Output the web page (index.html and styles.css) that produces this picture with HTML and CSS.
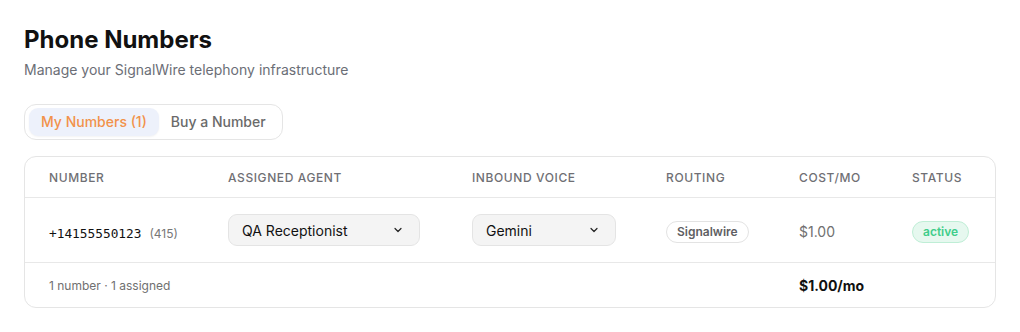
FILE: index.html
```html
<!DOCTYPE html>
<html>
<head>
<meta charset="utf-8">
<link rel="stylesheet" href="styles.css">
</head>
<body>
<main class="page">
  <h1 class="title">Phone Numbers</h1>
  <p class="subtitle">Manage your SignalWire telephony infrastructure</p>
  <div class="tabs">
    <button class="tab tab-active">My Numbers (1)</button>
    <button class="tab">Buy a Number</button>
  </div>
  <section class="card">
    <div class="row head">
      <div class="cell">Number</div>
      <div class="cell">Assigned Agent</div>
      <div class="cell">Inbound Voice</div>
      <div class="cell">Routing</div>
      <div class="cell">Cost/mo</div>
      <div class="cell">Status</div>
    </div>
    <div class="row body">
      <div class="cell lowered"><span class="num">+14155550123</span><span class="area">(415)</span></div>
      <div class="cell">
        <div class="select select-agent"><span>QA Receptionist</span>
          <svg width="12" height="12" viewBox="0 0 24 24" fill="none" stroke="#222" stroke-width="2.4" stroke-linecap="round" stroke-linejoin="round"><path d="M6 9l6 6 6-6"/></svg>
        </div>
      </div>
      <div class="cell">
        <div class="select select-voice"><span>Gemini</span>
          <svg width="12" height="12" viewBox="0 0 24 24" fill="none" stroke="#222" stroke-width="2.4" stroke-linecap="round" stroke-linejoin="round"><path d="M6 9l6 6 6-6"/></svg>
        </div>
      </div>
      <div class="cell lowered"><span class="pill pill-route">Signalwire</span></div>
      <div class="cell lowered cost">$1.00</div>
      <div class="cell lowered"><span class="pill pill-active">active</span></div>
    </div>
    <div class="row foot">
      <div class="cell span3 summary">1 number · 1 assigned</div>
      <div class="cell"></div>
      <div class="cell total">$1.00/mo</div>
      <div class="cell"></div>
    </div>
  </section>
</main>
</body>
</html>
```
FILE: styles.css
```css
* { box-sizing: border-box; }
html, body { margin: 0; padding: 0; background: #fff; }
body { font-family: Inter, "Noto Sans", sans-serif; color: #111; }
.page { padding: 24px 24px 0 24px; }
.title { margin: 0; font-size: 24px; font-weight: 700; line-height: 32px; color: #111; }
.subtitle { margin: 4px 0 0; font-size: 14px; line-height: 20px; color: #6b6e76; }
.tabs { display: inline-flex; margin-top: 24px; padding: 3px 4px; border: 1px solid #e5e5e5; border-radius: 12px; }
.tab { font-family: inherit; font-size: 14px; font-weight: 500; line-height: 20px; padding: 4px 12px; border: 0; border-radius: 9px; background: transparent; color: #6a6a6a; cursor: pointer; }
.tab-active { background: #edf1fb; color: #f2924a; box-shadow: 0 1px 2px rgba(0,0,0,0.05); }
.card { margin-top: 16px; border: 1px solid #e5e5e5; border-radius: 12px; overflow: hidden; }
.row { display: grid; grid-template-columns: 179px 244px 194px 133px 113px 1fr; align-items: center; }
.cell { padding-left: 24px; }
.head { height: 41px; border-bottom: 1px solid #e8e8e8; }
.head .cell { font-size: 12px; font-weight: 500; letter-spacing: 0.6px; text-transform: uppercase; color: #6f6f74; padding-top: 1px; }
.body { height: 65px; border-bottom: 1px solid #e8e8e8; }
.lowered { padding-top: 3px; }
.num { font-family: "DejaVu Sans Mono", "Liberation Mono", monospace; font-size: 12.8px; color: #111; }
.area { font-size: 12px; color: #777; margin-left: 8px; }
.select { display: flex; align-items: center; justify-content: space-between; height: 32px; padding: 0 15px 0 13px; background: #f4f4f4; border: 1px solid #e4e4e4; border-radius: 9px; font-size: 14px; color: #111; }
.select-agent { width: 192px; }
.select-voice { width: 144px; }
.pill { display: inline-block; font-size: 12px; font-weight: 600; line-height: 18px; padding: 1px 10px; border-radius: 999px; }
.pill-route { border: 1px solid #e3e3e3; color: #5f5f63; background: #fff; }
.pill-active { border: 1px solid #bfeed6; background: #e6f8ef; color: #3fcd8a; }
.cost { font-size: 14px; color: #707070; }
.foot { height: 44px; }
.span3 { grid-column: span 3; }
.summary { font-size: 12px; color: #707070; }
.total { font-size: 14px; font-weight: 700; color: #111; }
```
